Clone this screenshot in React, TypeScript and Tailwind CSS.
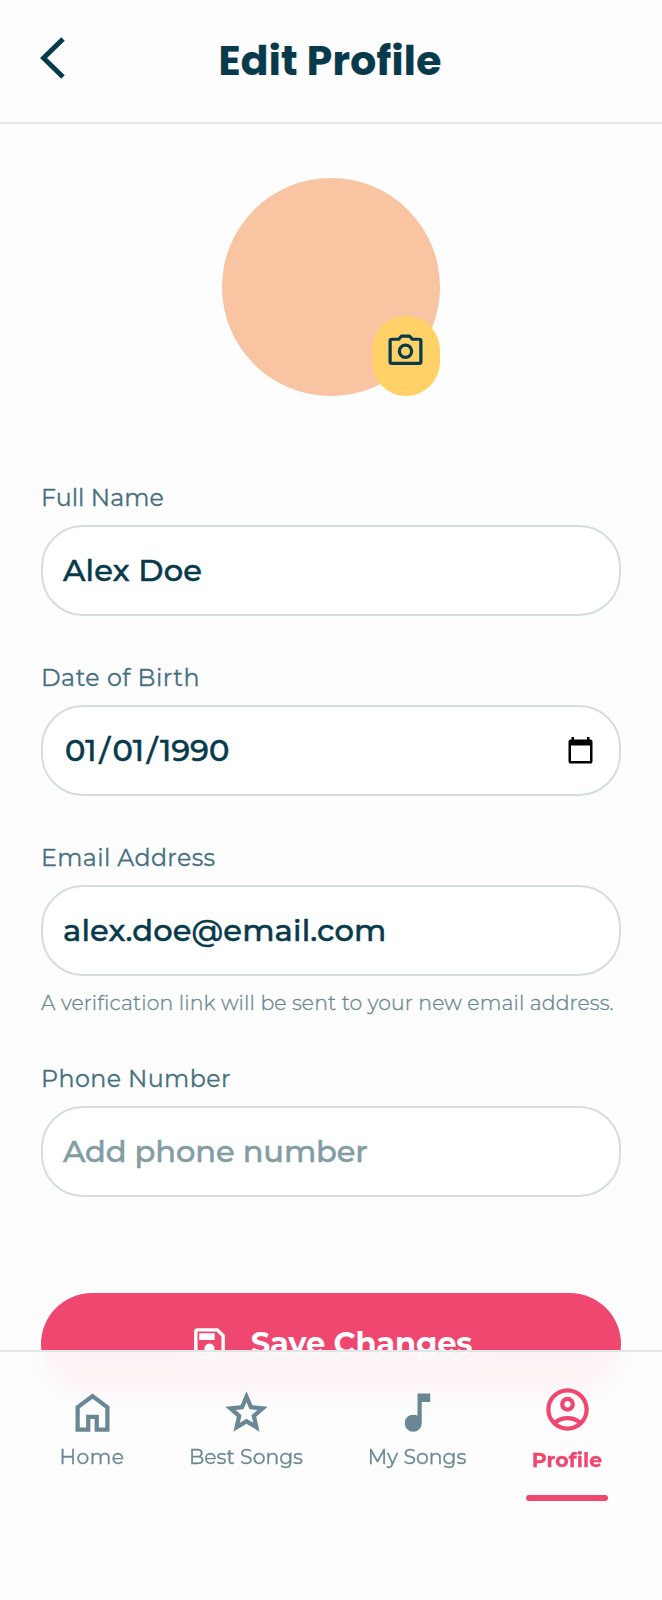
import type { ReactNode } from "react";

function Icon({ d, className }: { d: string; className: string }) {
  return (
    <svg viewBox="0 0 24 24" fill="currentColor" className={className} aria-hidden="true">
      <path d={d} />
    </svg>
  );
}

const HOME = "M6 19h3v-6h6v6h3v-9l-6-4.5L6 10v9Zm-2 2V9l8-6 8 6v12h-7v-6h-2v6H4Z";
const STAR =
  "M8.85 16.825l3.15-1.9 3.15 1.925-.825-3.6 2.775-2.4-3.65-.325-1.45-3.4-1.45 3.375-3.65.325 2.775 2.425-.825 3.575ZM5.825 21l1.625-7.025L2 9.25l7.2-.625L12 2l2.8 6.625 7.2.625-5.45 4.725L18.175 21 12 17.275 5.825 21Z";
const NOTE =
  "M10 21q-1.65 0-2.825-1.175T6 17q0-1.65 1.175-2.825T10 13q.575 0 1.063.138.487.137.937.412V3h6v4h-4v10q0 1.65-1.175 2.825T10 21Z";
const ACCOUNT =
  "M5.85 17.1q1.275-.975 2.85-1.538Q10.275 15 12 15q1.725 0 3.3.562 1.575.563 2.85 1.538.875-1.025 1.363-2.325Q20 13.475 20 12q0-3.325-2.337-5.663Q15.325 4 12 4T6.338 6.337Q4 8.675 4 12q0 1.475.488 2.775.487 1.3 1.362 2.325ZM12 13q-1.475 0-2.488-1.012Q8.5 10.975 8.5 9.5t1.012-2.488Q10.525 6 12 6t2.488 1.012Q15.5 8.025 15.5 9.5t-1.012 2.488Q13.475 13 12 13Zm0 9q-2.075 0-3.9-.788-1.825-.787-3.175-2.137-1.35-1.35-2.137-3.175Q2 14.075 2 12t.788-3.9q.787-1.825 2.137-3.175 1.35-1.35 3.175-2.138Q9.925 2 12 2t3.9.787q1.825.788 3.175 2.138 1.35 1.35 2.137 3.175Q22 9.925 22 12t-.788 3.9q-.787 1.825-2.137 3.175-1.35 1.35-3.175 2.137Q14.075 22 12 22Zm0-2q1.325 0 2.5-.387 1.175-.388 2.15-1.113-.975-.725-2.15-1.113Q13.325 17 12 17q-1.325 0-2.5.387-1.175.388-2.15 1.113.975.725 2.15 1.113Q10.675 20 12 20Zm0-9q.65 0 1.075-.425.425-.425.425-1.075 0-.65-.425-1.075Q12.65 8 12 8q-.65 0-1.075.425Q10.5 8.85 10.5 9.5q0 .65.425 1.075Q11.35 11 12 11Z";
const SAVE =
  "M17 3H5a2 2 0 0 0-2 2v14a2 2 0 0 0 2 2h14a2 2 0 0 0 2-2V7l-4-4Zm2 16H5V5h11.17L19 7.83V19Zm-7-7a3 3 0 1 0 0 6 3 3 0 0 0 0-6ZM6 6h9v4H6V6Z";

function Field({
  label,
  labelClass,
  children,
  help,
}: {
  label: string;
  labelClass: string;
  children: ReactNode;
  help?: ReactNode;
}) {
  return (
    <div className="flex flex-col">
      <div className="mb-[9px] flex h-9 items-center text-[23.76px] leading-9 font-normal text-[#457080] [-webkit-text-stroke:0.3px_currentColor]">
        <span className={labelClass}>{label}</span>
      </div>
      <div className="flex h-[91px] items-center justify-between rounded-[42px] border-2 border-[#d4dde1] bg-white pr-[26px] pb-px pl-[20px] text-[30.55px] leading-[46px] font-medium text-[#073b4c] [-webkit-text-stroke:0.5px_currentColor]">
        {children}
      </div>
      {help}
    </div>
  );
}

function NavItem({ children, className }: { children: ReactNode; className: string }) {
  return <div className={`flex flex-col items-center ${className}`}>{children}</div>;
}

export default function App() {
  return (
    <div className="relative h-[1600px] w-full overflow-hidden bg-[#fdfdfd] font-['Montserrat','Inter',sans-serif] whitespace-nowrap text-[#073b4c]">
      <header className="grid h-[124px] grid-cols-[1fr_auto_1fr] items-center border-b-2 border-[#e3e9eb] pr-[42px] pl-[40px]">
        <svg viewBox="0 0 26 42" className="mb-[6px] h-[42px] w-[26px]" fill="none" aria-hidden="true">
          <path d="M23 2 3.500 21l19.500 19" stroke="currentColor" strokeWidth="5" />
        </svg>
        <h1 className="font-['Poppins','Inter',sans-serif] text-[40.74px] leading-[56px] font-bold tracking-[0.3px] [-webkit-text-stroke:0.2px_currentColor]">Edit Profile</h1>
      </header>

      <main className="flex flex-col px-[41px]">
        <div className="relative mx-auto mt-[54px] h-[218px] w-[218px] rounded-full bg-[#f8c4a1]">
          <div className="absolute right-0 bottom-0 flex h-20 w-[68px] justify-center rounded-[34px] bg-[#ffd166] pt-[13px] pr-px">
            <svg viewBox="0 0 24 24" className="h-[41px] w-[41px]" fill="none" stroke="currentColor" strokeWidth="1.9" aria-hidden="true">
              <path d="M4 6h4l1.700-1.900h4.600L16 6h4a1 1 0 0 1 1 1v12.100a1 1 0 0 1-1 1H4a1 1 0 0 1-1-1V7a1 1 0 0 1 1-1Z" strokeLinejoin="round" />
              <circle cx="12" cy="13" r="3.600" />
            </svg>
          </div>
        </div>

        <div className="mt-[84px] flex flex-col gap-[44px]">
          <Field label="Full Name" labelClass="tracking-[0.05px]">
            <span className="tracking-[0.2px]">Alex Doe</span>
          </Field>
          <Field label="Date of Birth" labelClass="tracking-[0.5px]">
            <span className="pl-[2px]">
              01<span className="px-[2.5px]">/</span>01<span className="px-[2.5px]">/</span>1990
            </span>
            <svg viewBox="0 0 25 27" className="h-[27px] w-[25px] text-black" fill="currentColor" aria-hidden="true">
              <path d="M3.500 0h2.500v2.500h13V0h2.500v2.500h1A2 2 0 0 1 24.500 4.500v20a2 2 0 0 1-2 2h-20a2 2 0 0 1-2-2v-20a2 2 0 0 1 2-2h1ZM3 8.500V24h19V8.500Z" fillRule="evenodd" />
            </svg>
          </Field>
          <Field
            label="Email Address"
            labelClass="tracking-[0.35px]"
            help={
              <p className="mt-[12px] -mb-px h-[30px] text-[20.37px] leading-[30px] font-light text-[#6a8995] [-webkit-text-stroke:0.35px_currentColor]">
                <span className="tracking-[0.15px]">A verification link will be sent to your new email address.</span>
              </p>
            }
          >
            <span className="tracking-[0.15px]">alex.doe@email.com</span>
          </Field>
          <Field label="Phone Number" labelClass="tracking-[0.4px]">
            <span className="tracking-[-0.12px] text-[#839da5]">Add phone number</span>
          </Field>
        </div>

        <button className="mt-[96px] flex h-[102px] items-center justify-center gap-[21px] rounded-[51px] bg-[#ef476f] pr-px pb-[2px] text-[30.55px] leading-[46px] font-bold text-white">
          <Icon d={SAVE} className="h-[41px] w-[41px]" />
          <span className="tracking-[-0.2px]">Save Changes</span>
        </button>
      </main>

      <nav className="absolute inset-x-0 bottom-0 flex h-[250px] border-t-2 border-[#e1e7e9] bg-[#fdfdfd]/95 text-[20.37px] leading-[30px] font-normal text-[#698894] backdrop-blur-[12px] [-webkit-text-stroke:0.3px_currentColor]">
        <NavItem className="ml-[41px] w-[102px] pt-[35px]">
          <Icon d={HOME} className="h-[51px] w-[51px]" />
          <span className="mt-[4px] tracking-[0.5px]">Home</span>
        </NavItem>
        <NavItem className="ml-[27px] w-[152px] pt-[35px]">
          <Icon d={STAR} className="h-[51px] w-[51px]" />
          <span className="mt-[4px]">Best Songs</span>
        </NavItem>
        <NavItem className="ml-[26px] w-[138px] pt-[35px]">
          <Icon d={NOTE} className="h-[51px] w-[51px]" />
          <span className="mt-[4px]">My Songs</span>
        </NavItem>
        <NavItem className="ml-[40px] w-[82px] pt-[32px] text-[#ef476f]">
          <Icon d={ACCOUNT} className="h-[51px] w-[51px]" />
          <span className="mt-[10px] font-bold tracking-[0.1px]">Profile</span>
          <div className="mt-[20px] h-[6px] w-[82px] rounded-full bg-[#ef476f]" />
        </NavItem>
      </nav>
    </div>
  );
}
